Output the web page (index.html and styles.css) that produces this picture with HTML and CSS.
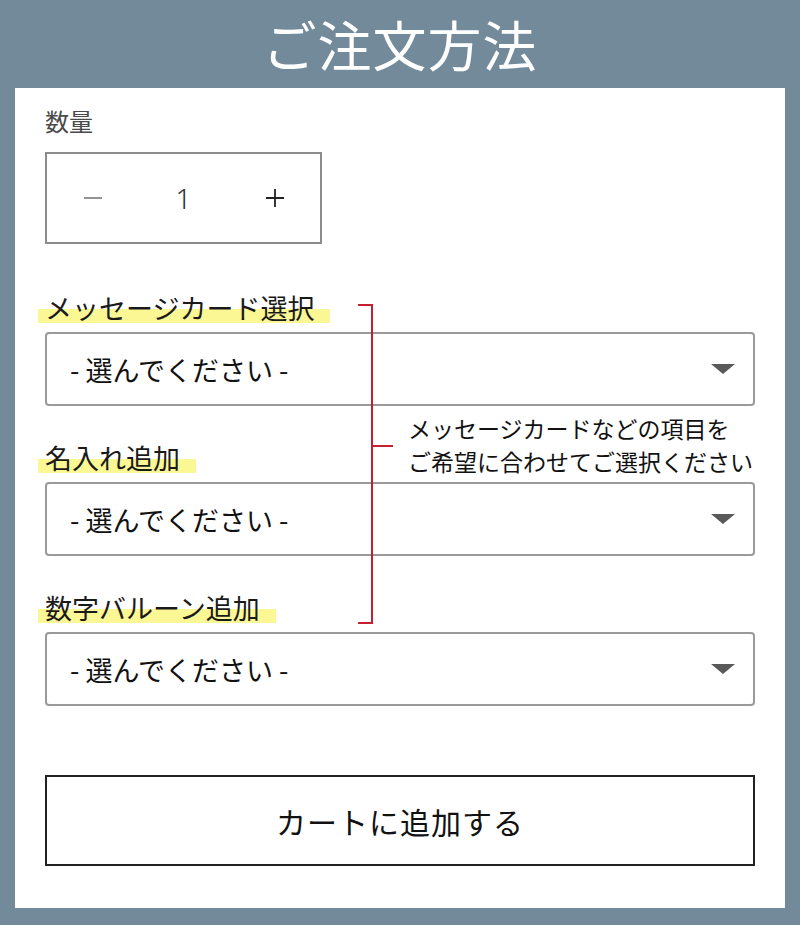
FILE: index.html
```html
<!DOCTYPE html>
<html lang="ja">
<head>
  <meta charset="UTF-8" />
  <meta name="viewport" content="width=device-width, initial-scale=1.0" />
  <title>ご注文方法</title>
  <link rel="stylesheet" href="styles.css">
</head>
<body>
  <header class="cabecera">
    <h1>ご注文方法</h1>
  </header>

  <div class="panel">
    <div class="etiqueta-cantidad">数量</div>
    <div class="cantidad">
      <span class="menos"><svg width="18" height="18" viewBox="0 0 18 18"><path d="M0 9 H18" stroke="#7a7a7a" stroke-width="1.6"/></svg></span>
      <span class="numero">1</span>
      <span class="mas"><svg width="18" height="18" viewBox="0 0 18 18"><path d="M0 9 H18 M9 0 V18" stroke="#222" stroke-width="1.8"/></svg></span>
    </div>

    <div class="campo">
      <span class="marcado">メッセージカード選択</span>
    </div>
    <div class="selector">
      <span>- 選んでください -</span>
      <svg class="flecha" width="24" height="10" viewBox="0 0 24 10"><path d="M0 0 H24 L12 10 Z" fill="#595959"/></svg>
    </div>

    <div class="campo segundo">
      <span class="marcado">名入れ追加</span>
    </div>
    <div class="selector">
      <span>- 選んでください -</span>
      <svg class="flecha" width="24" height="10" viewBox="0 0 24 10"><path d="M0 0 H24 L12 10 Z" fill="#595959"/></svg>
    </div>

    <div class="campo segundo">
      <span class="marcado">数字バルーン追加</span>
    </div>
    <div class="selector">
      <span>- 選んでください -</span>
      <svg class="flecha" width="24" height="10" viewBox="0 0 24 10"><path d="M0 0 H24 L12 10 Z" fill="#595959"/></svg>
    </div>

    <button class="boton-carrito">カートに追加する</button>

    <!-- anotación con corchete rojo -->
    <div class="corchete"></div>
    <div class="corchete-punta"></div>
    <p class="nota">メッセージカードなどの項目を<br>ご希望に合わせてご選択ください</p>
  </div>
</body>
</html>
```

FILE: styles.css
```css
body {
  margin: 0;
  background: #728a9a;
  font-family: "Noto Sans CJK JP", "Noto Sans", sans-serif;
  color: #1a1a1a;
}

.cabecera {
  height: 88px;
  display: flex;
  align-items: center;
  justify-content: center;
}

.cabecera h1 {
  margin: 0;
  color: #fff;
  font-size: 54px;
  font-weight: 400;
  line-height: 1;
  letter-spacing: 1px;
}

.panel {
  position: relative;
  margin: 0 15px;
  background: #fff;
  padding: 18px 30px 42px;
}

.etiqueta-cantidad {
  font-size: 24px;
  line-height: 30px;
  color: #4a4a4a;
}

.cantidad {
  margin-top: 16px;
  width: 277px;
  height: 92px;
  box-sizing: border-box;
  border: 2px solid #8c8c8c;
  display: grid;
  grid-template-columns: 1fr 1fr 1fr;
  align-items: center;
  justify-items: center;
  font-family: "Noto Sans", sans-serif;
  font-size: 28px;
}

.cantidad svg {
  display: block;
}

.numero {
  color: #333;
  font-weight: 300;
}

.campo {
  margin-top: 49px;
  font-size: 27px;
  line-height: 30px;
  color: #1a1a1a;
}

.campo.segundo {
  margin-top: 37px;
}

.marcado {
  display: inline-block;
  margin-left: -7px;
  padding: 0 16px 0 7px;
  background: linear-gradient(to bottom, transparent 54%, #fbf794 54%);
}

.selector {
  margin-top: 9px;
  height: 74px;
  box-sizing: border-box;
  border: 2px solid #9a9a9a;
  border-radius: 4px;
  display: flex;
  align-items: center;
  justify-content: space-between;
  padding: 0 18px 0 23px;
  font-size: 27px;
  color: #111;
}

.flecha {
  display: block;
}

.boton-carrito {
  display: block;
  width: 100%;
  margin-top: 69px;
  height: 91px;
  box-sizing: border-box;
  border: 2px solid #222;
  background: #fff;
  font-family: "Noto Sans CJK JP", sans-serif;
  font-size: 30px;
  color: #111;
  letter-spacing: 1px;
}

.corchete {
  position: absolute;
  left: 343px;
  top: 216px;
  width: 13px;
  height: 316px;
  border: 2px solid #c61f31;
  border-left: none;
}

.corchete-punta {
  position: absolute;
  left: 358px;
  top: 357px;
  width: 20px;
  height: 2px;
  background: #c61f31;
}

.nota {
  position: absolute;
  left: 393px;
  top: 324px;
  margin: 0;
  font-size: 23px;
  line-height: 33px;
  color: #111;
  white-space: nowrap;
}
```
